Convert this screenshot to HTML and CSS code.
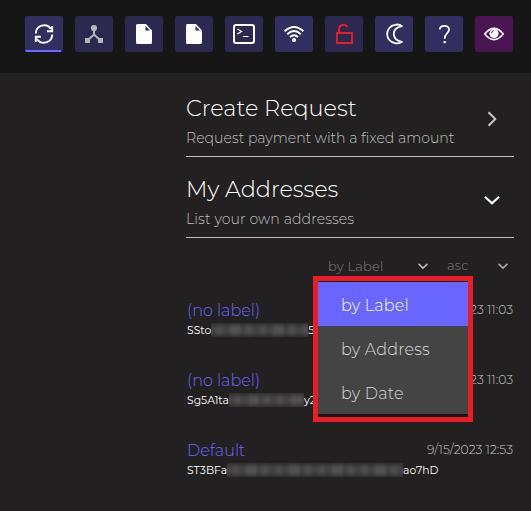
FILE: index.html
```html
<!DOCTYPE html>
<html lang="en">
<head>
<meta charset="utf-8">
<title>Addresses</title>
<link rel="stylesheet" href="styles.css">
</head>
<body>
<header class="toolbar">
  <button class="tool active"><svg viewBox="0 0 38 36"><g fill="none" stroke="#fff" stroke-width="1.9"><path d="M10.8 17.5A8.3 8.3 0 0 1 26 13M27.2 18.5A8.3 8.3 0 0 1 12 23"/><path d="M27.2 10v5.2H22M10.8 26v-5.2H16"/></g></svg></button>
  <button class="tool"><svg viewBox="0 0 38 36"><circle cx="19" cy="12" r="3.1" fill="#b5b5b5"/><path d="M19 13v5.5l-6 5.5M19 18.500l6 5.500" fill="none" stroke="#b5b5b5" stroke-width="2"/><path d="M10 22h5v5h-5zM23 22h5v5h-5z" fill="#b5b5b5"/></svg></button>
  <button class="tool"><svg viewBox="0 0 38 36"><path d="M12.500 8H21l6 6.500V26.500a1.500 1.500 0 0 1-1.500 1.500h-13a1.500 1.500 0 0 1-1.500-1.500v-17a1.500 1.500 0 0 1 1.500-1.500z" fill="#fff"/><path d="M20.500 10v4.500H25z" fill="#2b294f"/></svg></button>
  <button class="tool"><svg viewBox="0 0 38 36"><path d="M12.500 8H21l6 6.500V26.500a1.500 1.500 0 0 1-1.500 1.500h-13a1.500 1.500 0 0 1-1.500-1.500v-17a1.500 1.500 0 0 1 1.500-1.500z" fill="#fff"/><path d="M20.500 10v4.500H25z" fill="#2b294f"/></svg></button>
  <button class="tool"><svg viewBox="0 0 38 36"><g fill="none" stroke="#fff"><rect x="9" y="9" width="20" height="18" rx="2" stroke-width="2"/><path d="M12.300 13l4.200 2.500-4.200 2.500M18 20.500h5.500" stroke-width="1.200"/></g></svg></button>
  <button class="tool bright"><svg viewBox="0 0 38 36"><g fill="none" stroke="#fff" stroke-width="1.900"><path d="M9.600 15.200q9.400-8.600 18.800 0M12.200 18.200q6.800-6.200 13.600 0M15 21q4-3.600 8 0"/></g><circle cx="19" cy="24" r="2.100" fill="#fff"/></svg></button>
  <button class="tool"><svg viewBox="0 0 38 36"><g fill="none" stroke="#ed1c24" stroke-width="1.900"><path d="M12 17h15v10H12z"/><path d="M14 17v-3.500a4.600 4.600 0 0 1 8.600-2.300"/></g></svg></button>
  <button class="tool bright"><svg viewBox="0 0 38 36"><path d="M27 10.200C24.500 8.200 21 8.600 20 8.900A9.200 9.200 0 0 0 20 27.100C23 27.600 25.500 27 27 25.800C16 23.500 16 12.500 27 10.200z" fill="none" stroke="#fff" stroke-width="1.800" stroke-linejoin="round"/></svg></button>
  <button class="tool bright"><svg viewBox="0 0 38 36"><path d="M14.800 13.500c0-4.600 9.300-5 9.300 0 0 3.500-4.500 4-4.500 9.300" fill="none" stroke="#fff" stroke-width="1.700"/><path d="M18.500 25h2.300v2.200h-2.300z" fill="#fff"/></svg></button>
  <button class="tool eye"><svg viewBox="0 0 38 36"><path d="M9.800 18q9.200-11.200 18.400 0q-9.200 11.200-18.400 0z" fill="none" stroke="#fff" stroke-width="1.600"/><circle cx="19" cy="17.500" r="4.600" fill="#fff"/><path d="M16.500 17.200a2.600 2.600 0 0 1 2.300-2.500" fill="none" stroke="#4b1452" stroke-width="1"/></svg></button>
</header>
<main class="panel">
  <section class="section">
    <div><h2>Create Request</h2><p>Request payment with a fixed amount</p></div>
    <svg class="chevron" viewBox="0 0 16 16"><path d="M4.500 1.200L11.300 8l-6.800 6.800" fill="none" stroke="#c4c4c4" stroke-width="2"/></svg>
  </section>
  <section class="section">
    <div><h2>My Addresses</h2><p class="wide">List your own addresses</p></div>
    <svg class="chevron" viewBox="0 0 16 16"><path d="M1 4.800l7 6.400 7-6.400" fill="none" stroke="#fff" stroke-width="2.200"/></svg>
  </section>
  <div class="filters">
    <div class="filter by"><span>by Label</span><svg viewBox="0 0 10 10"><path d="M.6 2.900L5 7.100l4.400-4.200" fill="none" stroke="#bbb" stroke-width="1.500"/></svg></div>
    <div class="filter order"><span>asc</span><svg viewBox="0 0 10 10"><path d="M.6 2.900L5 7.100l4.400-4.200" fill="none" stroke="#aaa" stroke-width="1.500"/></svg></div>
    <div class="menu">
      <div class="option selected">by Label</div>
      <div class="option">by Address</div>
      <div class="option">by Date</div>
    </div>
  </div>
  <article class="address">
    <div class="row"><h3>(no label)</h3><time>9/15/2023 11:03</time></div>
    <div class="hash"><span>SSto</span><i class="mask m1"></i><span>5T</span></div>
  </article>
  <article class="address">
    <div class="row"><h3>(no label)</h3><time>9/15/2023 11:03</time></div>
    <div class="hash"><span>Sg5A1ta</span><i class="mask m2"></i><span>y2</span></div>
  </article>
  <article class="address">
    <div class="row"><h3>Default</h3><time>9/15/2023 12:53</time></div>
    <div class="hash"><span>ST3BFa</span><i class="mask m3"></i><span>ao7hD</span></div>
  </article>
</main>
</body>
</html>
```

FILE: styles.css
```css
* { box-sizing: border-box; }
body {
  margin: 0;
  width: 531px;
  height: 511px;
  overflow: hidden;
  background: #222021;
  color: #fff;
  font-family: Montserrat, Inter, sans-serif;
  font-weight: 300;
}
h2, h3, p { margin: 0; font-weight: 300; white-space: nowrap; }
.toolbar {
  display: flex;
  gap: 12px;
  height: 73px;
  padding: 16px 0 0 25px;
  background: #161616;
}
.tool {
  flex: none;
  width: 38px;
  height: 36px;
  padding: 0;
  border: 0;
  border-radius: 2px;
  background: #2b294f;
}
.tool svg { display: block; width: 38px; height: 36px; }
.active { background: linear-gradient(#6b69ff, #6b69ff) left bottom / 36px 2px no-repeat #312e60; }
.bright { background: #312e60; }
.eye { background: #4b1452; }
.panel { padding: 3px 17px 0 186px; }
.section {
  display: flex;
  justify-content: space-between;
  align-items: center;
  height: 81px;
  padding: 10px 14px 0 0;
  border-bottom: 1px solid #bdbdbd;
}
.section h2 { font-size: 22.400px; line-height: 32px; padding: 2px 0 1px; }
.section p { font-size: 14.100px; line-height: 27px; color: #c0c0c0; }
.section .wide { letter-spacing: .1px; }
.chevron { width: 16px; height: 16px; margin-top: -5px; }
.filters {
  position: relative;
  display: flex;
  height: 56px;
  padding: 18px 5px 0 142px;
  gap: 19px;
}
.filter {
  display: flex;
  align-items: center;
  justify-content: space-between;
  height: 20px;
  font-size: 13px;
  letter-spacing: .2px;
  color: #808080;
}
.filter svg { width: 10px; height: 10px; }
.by { width: 100px; }
.order { width: 61px; }
.order span { margin-top: -2px; }
.menu {
  position: absolute;
  left: 127px;
  top: 38px;
  z-index: 2;
  width: 160px;
  height: 146px;
  padding-top: 1px;
  border: 5px solid #ed1c24;
  background: #171616;
}
.option {
  height: 44px;
  padding-left: 23px;
  background: #444;
  color: #dadada;
  font-size: 16px;
  letter-spacing: .2px;
  line-height: 48px;
}
.selected { background: #6966ff; color: #fff; }
.address { height: 70px; padding-top: 6px; }
.row { display: flex; justify-content: space-between; height: 22px; padding-right: 1px; }
h3 { font-size: 16px; line-height: 22px; color: #6b68ff; padding-left: 1px; }
time { font-size: 12.300px; line-height: 20px; color: #c8c8c8; }
.hash {
  display: flex;
  align-items: center;
  height: 16px;
  padding-left: 1px;
  font-size: 10.800px;
  font-weight: 400;
}
.mask {
  height: 14px;
  background:
    repeating-linear-gradient(90deg, #5550 0 4px, #5e5e5e60 8px 10px, #5550 13px 17px, #68686860 21px 28px, #5550 31px 33px, #60606060 37px 39px, #5550 43px),
    #444343;
  -webkit-mask-image: linear-gradient(#0006, #000 35% 65%, #0006);
  mask-image: linear-gradient(#0006, #000 35% 65%, #0006);
}
.m1 { width: 97px; }
.m2 { width: 75px; }
.m3 { width: 176px; }
```
